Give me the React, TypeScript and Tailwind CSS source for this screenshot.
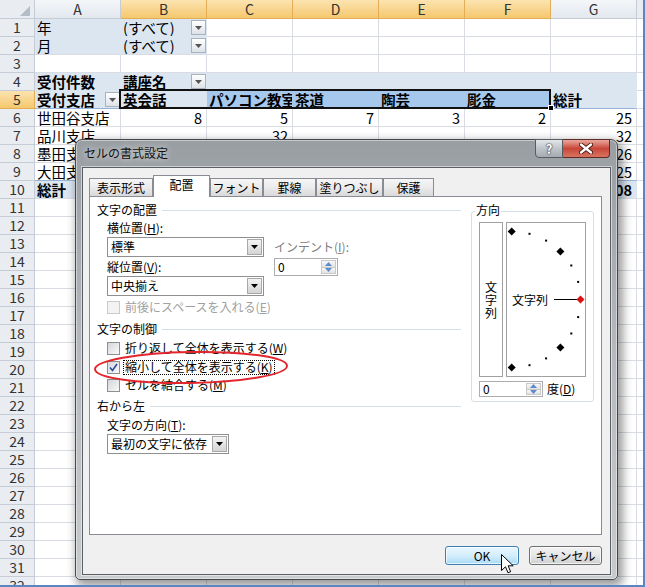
import type { ReactNode } from "react";

type Fill = "white" | "pivot" | "sel";
type Border = "grid" | "fill" | "blue";
type Cell = { t?: string; b?: boolean; r?: boolean; f?: Fill; dd?: boolean; bb?: Border };

const W = (t = "", o: Partial<Cell> = {}): Cell => ({ t, f: "white", ...o });
const P = (t = "", o: Partial<Cell> = {}): Cell => ({ t, f: "pivot", ...o });
const S = (t: string): Cell => ({ t, f: "sel", b: true, bb: "blue" });
const N = (t: string, o: Partial<Cell> = {}): Cell => W(t, { r: true, ...o });

const blank = (): Cell[] => Array.from({ length: 7 }, () => W());

const ROWS: Cell[][] = [
  [P("年", { bb: "fill" }), P("(すべて)", { dd: true, bb: "fill" }), W(), W(), W(), W(), W()],
  [P("月"), P("(すべて)", { dd: true }), W(), W(), W(), W(), W()],
  blank(),
  [
    P("受付件数", { b: true, bb: "fill" }),
    P("講座名", { b: true, dd: true, bb: "fill" }),
    P("", { bb: "fill" }),
    P("", { bb: "fill" }),
    P("", { bb: "fill" }),
    P("", { bb: "fill" }),
    P("", { bb: "fill" }),
  ],
  [
    P("受付支店", { b: true, dd: true, bb: "blue" }),
    P("英会話", { b: true, bb: "blue" }),
    S("パソコン教室"),
    S("茶道"),
    S("陶芸"),
    S("彫金"),
    P("総計", { b: true, bb: "blue" }),
  ],
  [W("世田谷支店"), N("8"), N("5"), N("7"), N("3"), N("2"), N("25")],
  [W("品川支店"), W(), N("32"), W(), W(), W(), N("32")],
  [W("墨田支店"), W(), W(), W(), N("14"), W(), N("26")],
  [
    W("大田支店", { bb: "blue" }),
    W("", { bb: "blue" }),
    W("", { bb: "blue" }),
    W("", { bb: "blue" }),
    W("", { bb: "blue" }),
    W("", { bb: "blue" }),
    N("25", { bb: "blue" }),
  ],
  [P("総計", { b: true }), P(), P(), P(), P(), P(), P("108", { b: true, r: true })],
  ...Array.from({ length: 22 }, blank),
];

const COLS = ["A", "B", "C", "D", "E", "F", "G"];

const FILL_CLS: Record<Fill, string> = {
  white: "bg-white border-r-[#d9dde3]",
  pivot: "bg-[#dce6f1] border-r-[#dce6f1]",
  sel: "bg-[#a6c8ec] border-r-[#a6c8ec]",
};

const BB_CLS: Record<Border, string> = {
  grid: "border-b-[#d9dde3]",
  fill: "border-b-[#dce6f1]",
  blue: "border-b-[#95b3d7]",
};

function Tri({ up, color }: { up?: boolean; color: string }) {
  return (
    <svg width="7" height="4" viewBox="0 0 7 4">
      <path d={up ? "M3.5 0L7 4H0z" : "M0 0h7L3.5 4z"} fill={color} />
    </svg>
  );
}

function FilterBtn() {
  return (
    <span className="ml-auto flex h-[15px] w-[15px] shrink-0 items-center justify-center border border-[#a9b2bd] bg-linear-to-b from-white to-[#dde2e8]">
      <Tri color="#555" />
    </span>
  );
}

function SheetCell({ c }: { c: Cell }) {
  return (
    <div
      className={`flex items-center overflow-hidden whitespace-nowrap border-r border-b pl-[2px] ${
        c.dd ? "pr-0" : "pr-[4px]"
      } ${c.r ? "justify-end" : ""} ${c.b ? "font-bold" : ""} ${FILL_CLS[c.f ?? "white"]} ${
        BB_CLS[c.bb ?? "grid"]
      }`}
    >
      <span className="leading-[17px]">{c.t}</span>
      {c.dd && <FilterBtn />}
    </div>
  );
}

function Sheet() {
  return (
    <div className="grid h-[585px] grid-cols-[35px_repeat(7,86px)_6px] grid-rows-[19px_repeat(32,18px)] overflow-hidden text-[14.5px] leading-[17px] text-black">
      <div className="flex items-end justify-end border-r border-b border-[#c5ccd5] bg-[#e9edf2] pr-[4px] pb-[2px]">
        <svg width="10" height="10" viewBox="0 0 10 10">
          <path d="M10 0V10H0z" fill="#b4bcc6" />
        </svg>
      </div>
      {COLS.map((col, i) => (
        <div
          key={col}
          className={`flex items-center justify-center border-r border-b text-[14px] text-[#333] ${
            i >= 1 && i <= 5
              ? "border-[#e4ac55] bg-linear-to-b from-[#fbe3b0] to-[#f5c86c]"
              : "border-[#c5ccd5] bg-linear-to-b from-[#f4f6f9] to-[#e3e8ee]"
          }`}
        >
          {col}
        </div>
      ))}
      <div className="border-b border-[#c5ccd5] bg-[#e9edf2]" />
      {ROWS.map((row, r) => (
        <div key={r} className="contents">
          <div
            className={`flex items-center justify-center border-r border-b text-[14px] text-[#333] ${
              r === 4
                ? "border-[#e4ac55] bg-linear-to-b from-[#fbe3b0] to-[#f5c86c]"
                : "border-[#c5ccd5] bg-[#e9edf2]"
            }`}
          >
            {r + 1}
          </div>
          {row.map((c, i) => (
            <SheetCell key={i} c={c} />
          ))}
          <div className="border-b border-[#d9dde3] bg-white" />
        </div>
      ))}
    </div>
  );
}

function Combo({ text, className }: { text: string; className: string }) {
  return (
    <div className={`flex items-stretch border border-[#8f9092] bg-white ${className}`}>
      <span className="flex flex-1 items-center pl-[3px]">{text}</span>
      <span className="my-[1px] mr-[1px] flex w-[15px] items-center justify-center border border-[#a8a8a8] bg-linear-to-b from-[#f4f4f4] to-[#d4d4d4]">
        <Tri color="#000" />
      </span>
    </div>
  );
}

function Spin({ className }: { className: string }) {
  return (
    <div className={`flex items-stretch border border-[#abadb3] bg-white ${className}`}>
      <span className="flex flex-1 items-center pl-[3px]">0</span>
      <span className="my-[1px] mr-[1px] flex w-[15px] flex-col">
        <span className="flex flex-1 items-center justify-center border border-[#c9c9c9] bg-linear-to-b from-[#f8f8f8] to-[#e2e2e2]">
          <Tri up color="#5c8ccc" />
        </span>
        <span className="flex flex-1 items-center justify-center border border-t-0 border-[#c9c9c9] bg-linear-to-b from-[#f8f8f8] to-[#e2e2e2]">
          <Tri color="#5c8ccc" />
        </span>
      </span>
    </div>
  );
}

function SectionHead({ label, className = "" }: { label: string; className?: string }) {
  return (
    <div className={`flex h-[16px] items-center ${className}`}>
      <span>{label}</span>
      <span className="ml-[5px] h-px flex-1 bg-[#d5dfe5]" />
    </div>
  );
}

function Check({
  label,
  checked,
  disabled,
  focus,
  className,
}: {
  label: ReactNode;
  checked?: boolean;
  disabled?: boolean;
  focus?: boolean;
  className: string;
}) {
  return (
    <div className={`flex h-[16px] items-center ${className}`}>
      <span
        className={`flex h-[13px] w-[13px] shrink-0 items-center justify-center border ${
          disabled
            ? "border-[#cbcbcb] bg-[#f3f3f3]"
            : "border-[#8e8f8f] bg-linear-to-br from-[#d3d6da] to-[#fafafa]"
        }`}
      >
        {checked && (
          <svg width="9" height="9" viewBox="0 0 9 9">
            <path d="M1 4.5L3.5 7.5L8 1" fill="none" stroke="#2a4a9c" strokeWidth="1.6" />
          </svg>
        )}
      </span>
      <span
        className={`ml-[3px] flex h-[15px] items-center border px-[1px] ${
          focus ? "border-dotted border-black" : "border-transparent"
        } ${disabled ? "text-[#a0a0a0]" : ""}`}
      >
        {label}
      </span>
    </div>
  );
}

function Orientation() {
  const marks = [];
  for (let a = 90; a >= -90; a -= 15) {
    const rad = (a * Math.PI) / 180;
    const x = 4.7 + 68.8 * Math.cos(rad);
    const y = 76.5 - 68 * Math.sin(rad);
    if (a % 45 === 0) {
      marks.push(
        <path
          key={a}
          d={`M${x} ${y - 4}L${x + 4} ${y}L${x} ${y + 4}L${x - 4} ${y}z`}
          fill={a === 0 ? "#e01010" : "#000"}
        />,
      );
    } else {
      marks.push(<rect key={a} x={x - 1} y={y - 1} width="2" height="2" fill="#000" />);
    }
  }
  return (
    <div className="relative ml-[3px] flex h-[155px] w-[80px] items-center border border-[#a0a0a0]">
      <svg className="absolute left-0 top-0" width="78" height="153" viewBox="0 0 78 153">
        {marks}
      </svg>
      <span className="ml-[5px]">文字列</span>
      <span className="ml-[6px] h-px w-[25px] bg-black" />
    </div>
  );
}

const TABS = [
  { label: "表示形式", w: "w-[64px]" },
  { label: "配置", w: "w-[57px]", active: true },
  { label: "フォント", w: "w-[53px]" },
  { label: "罫線", w: "w-[53px]" },
  { label: "塗りつぶし", w: "w-[67px]" },
  { label: "保護", w: "w-[51px]" },
];

function Dialog() {
  return (
    <div className="absolute left-[75px] top-[139px] flex h-[441px] w-[543px] flex-col rounded-t-[7px] rounded-b-[5px] border border-[#44484d] bg-linear-to-b from-[#999ea3] via-[#b6babe] to-[#c7cacd] text-[12px] leading-[16px] text-black shadow-[3px_4px_10px_2px_rgba(0,0,0,0.4),inset_0_0_0_1px_rgba(255,255,255,0.45)]">
      <div className="flex h-[27px] shrink-0 items-start">
        <span className="ml-[8px] mt-[5px] text-[#111] [text-shadow:0_0_6px_rgba(255,255,255,0.9)]">
          セルの書式設定
        </span>
        <div className="-mt-px ml-auto mr-[7px] flex">
          <span className="flex h-[19px] w-[28px] items-center justify-center rounded-bl-[4px] border border-[#575c63] bg-linear-to-b from-[#e4e7ea] via-[#bfc4c9] to-[#a5abb2] text-[13px] font-bold text-white [text-shadow:0_0_2px_#333,0_0_1px_#000]">
            ?
          </span>
          <span className="flex h-[19px] w-[47px] items-center justify-center rounded-br-[4px] border border-l-0 border-[#5e2a25] bg-linear-to-b from-[#e9a89e] via-[#c7463a] to-[#d8735f]">
            <svg width="14" height="11" viewBox="0 0 14 11">
              <path d="M2 1.5L12 9.5M12 1.5L2 9.5" stroke="#4a1d18" strokeWidth="4.2" strokeLinecap="round" />
              <path d="M2 1.5L12 9.5M12 1.5L2 9.5" stroke="#fff" strokeWidth="2.3" strokeLinecap="round" />
            </svg>
          </span>
        </div>
      </div>
      <div className="mx-[6px] mb-[4px] flex flex-1 flex-col border border-[#5b5f64] bg-[#f0f0f0] shadow-[0_0_0_1px_rgba(255,255,255,0.5)]">
        <div className="ml-[6px] mt-[7px] flex h-[21px] items-end">
          {TABS.map((t) =>
            t.active ? (
              <div
                key={t.label}
                className={`relative z-10 -mb-px flex h-[22px] items-center justify-center border border-b-0 border-[#898c95] bg-white pb-[3px] ${t.w}`}
              >
                {t.label}
              </div>
            ) : (
              <div
                key={t.label}
                className={`flex h-[18px] items-center justify-center border border-b-0 border-[#898c95] bg-linear-to-b from-[#f6f6f6] via-[#ebebeb] to-[#d9d9d9] ${t.w}`}
              >
                {t.label}
              </div>
            ),
          )}
        </div>
        <div className="ml-[6px] flex h-[339px] w-[513px] border border-[#898c95] bg-white">
          <div className="flex w-[371px] flex-col pl-[7px] pt-[5px]">
            <SectionHead label="文字の配置" />
            <div className="ml-[10px] mt-[2px] h-[16px]">
              横位置(<u>H</u>):
            </div>
            <div className="ml-[10px] mt-[1px] flex">
              <div className="flex w-[157px] flex-col">
                <Combo text="標準" className="h-[20px]" />
                <div className="mt-[2px] h-[16px]">
                  縦位置(<u>V</u>):
                </div>
                <Combo text="中央揃え" className="mt-[1px] h-[20px]" />
              </div>
              <div className="ml-[10px] flex flex-col pt-[2px]">
                <div className="h-[16px] text-[#808080]">
                  インデント(<u>I</u>):
                </div>
                <Spin className="mt-[3px] h-[18px] w-[64px]" />
              </div>
            </div>
            <Check
              className="ml-[10px] mt-[3px]"
              disabled
              label={
                <>
                  前後にスペースを入れる(<u>E</u>)
                </>
              }
            />
            <SectionHead label="文字の制御" className="mt-[6px]" />
            <Check
              className="ml-[10px] mt-[3px]"
              label={
                <>
                  折り返して全体を表示する(<u>W</u>)
                </>
              }
            />
            <Check
              className="ml-[10px] mt-[3px]"
              checked
              focus
              label={
                <>
                  縮小して全体を表示する(<u>K</u>)
                </>
              }
            />
            <Check
              className="ml-[10px] mt-[2px]"
              label={
                <>
                  セルを結合する(<u>M</u>)
                </>
              }
            />
            <SectionHead label="右から左" className="mt-[5px]" />
            <div className="ml-[10px] mt-[3px] h-[16px]">
              文字の方向(<u>T</u>):
            </div>
            <Combo text="最初の文字に依存" className="ml-[10px] mt-[1px] h-[20px] w-[122px]" />
          </div>
          <div className="relative ml-[10px] mt-[14px] h-[191px] w-[123px] rounded-[3px] border border-[#d5dfe5] pl-[7px] pt-[10px]">
            <span className="absolute -top-[10px] left-[3px] bg-white px-[1px]">方向</span>
            <div className="flex">
              <div className="flex h-[155px] w-[24px] flex-col items-center justify-center border border-[#a0a0a0] leading-[13px]">
                <span>文</span>
                <span>字</span>
                <span>列</span>
              </div>
              <Orientation />
            </div>
            <div className="mt-[4px] flex items-center">
              <Spin className="h-[16px] w-[64px]" />
              <span className="ml-[4px]">
                度(<u>D</u>)
              </span>
            </div>
          </div>
        </div>
        <div className="mr-[8px] mt-[11px] flex justify-end gap-[10px]">
          <div className="flex h-[19px] w-[74px] items-center justify-center rounded-[3px] border border-[#3c7fb1] bg-linear-to-b from-[#eaf6fd] via-[#d4eefc] to-[#a9daf6] shadow-[inset_0_0_0_1px_rgba(255,255,255,0.7)]">
            OK
          </div>
          <div className="flex h-[19px] w-[73px] items-center justify-center rounded-[3px] border border-[#707070] bg-linear-to-b from-[#f3f3f3] via-[#e6e6e6] to-[#cfcfcf] shadow-[inset_0_0_0_1px_rgba(255,255,255,0.7)]">
            キャンセル
          </div>
        </div>
      </div>
    </div>
  );
}

export default function App() {
  return (
    <div className="relative h-[587px] w-[645px] overflow-hidden border-r-2 border-b-2 border-[#5a86c4] bg-white font-['Noto_Sans_CJK_JP','Noto_Sans',sans-serif]">
      <Sheet />
      {/* selection outline B5:F5 */}
      <div className="absolute left-[119px] top-[89px] h-[20px] w-[432px] border-2 border-[#111]" />
      <div className="absolute left-[548px] top-[105px] h-[6px] w-[6px] border border-white bg-black" />
      <Dialog />
      <svg className="absolute left-[93px] top-[350px]" width="200" height="36" viewBox="0 0 200 36">
        <ellipse cx="98" cy="17.5" rx="96" ry="15.5" fill="none" stroke="#e3262e" strokeWidth="2" transform="rotate(-1 98 17.5)" />
      </svg>
      <svg className="absolute left-[501px] top-[554px]" width="13" height="20" viewBox="0 0 13 20">
        <path d="M0.5 0.5V16.5L4.5 12.8L7 18.8L9.6 17.7L7.2 11.8H12.2Z" fill="#fff" stroke="#000" strokeWidth="1" />
      </svg>
    </div>
  );
}
